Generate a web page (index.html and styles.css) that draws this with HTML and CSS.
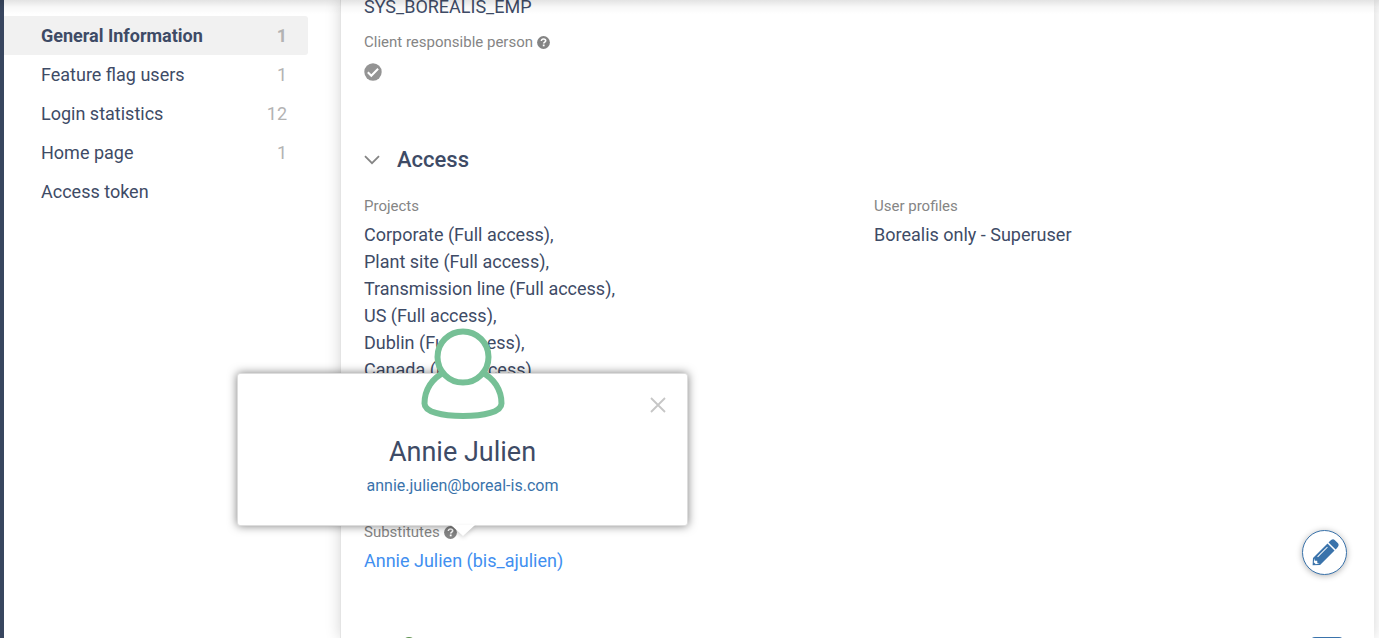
FILE: index.html
```html
<!DOCTYPE html>
<html lang="en">
<head>
<meta charset="utf-8">
<title>General Information</title>
<link rel="stylesheet" href="styles.css">
</head>
<body>
<div class="app">
  <div class="rail"></div>
  <nav class="sidebar">
    <a class="item active" href="#general"><span>General Information</span><span class="count">1</span></a>
    <a class="item" href="#flags"><span>Feature flag users</span><span class="count">1</span></a>
    <a class="item" href="#login"><span>Login statistics</span><span class="count">12</span></a>
    <a class="item" href="#home"><span>Home page</span><span class="count">1</span></a>
    <a class="item" href="#token"><span>Access token</span></a>
  </nav>
  <main class="content">
    <div class="system-name">SYS_BOREALIS_EMP</div>
    <section class="field responsible">
      <div class="label">Client responsible person
        <svg class="help" viewBox="0 0 13 13"><circle cx="6.5" cy="6.5" r="6.4" fill="#848484"/><path d="M4.4 5C4.4 3.7 5.2 3 6.5 3s2.2.8 2.2 1.8c0 1.3-2 1.3-2 2.7" fill="none" stroke="#fff" stroke-width="1.6"/><path d="M5.8 8.5h1.8v1.8H5.8z" fill="#fff"/></svg>
      </div>
      <div class="value check">
        <svg class="tick" viewBox="0 0 18 18"><circle cx="9" cy="9" r="8.7" fill="#949494"/><path d="M3.8 9.3l3.5 3.5 6.8-7" fill="none" stroke="#fff" stroke-width="2"/></svg>
      </div>
    </section>
    <h2 class="heading">
      <svg class="chevron" viewBox="0 0 16 10"><path d="M1 1.2l7 7 7-7" fill="none" stroke="#858585" stroke-width="1.8"/></svg>
      Access
    </h2>
    <div class="columns">
      <section class="field">
        <div class="label">Projects</div>
        <ul class="value projects">
          <li>Corporate (Full access),</li>
          <li>Plant site (Full access),</li>
          <li>Transmission line (Full access),</li>
          <li>US (Full access),</li>
          <li>Dublin (Full access),</li>
          <li>Canada (Full access)</li>
        </ul>
      </section>
      <section class="field">
        <div class="label">User profiles</div>
        <div class="value">Borealis only - Superuser</div>
      </section>
    </div>
    <section class="field substitutes">
      <div class="label">Substitutes
        <svg class="help" viewBox="0 0 13 13"><circle cx="6.5" cy="6.5" r="6.4" fill="#848484"/><path d="M4.4 5C4.4 3.7 5.2 3 6.5 3s2.2.8 2.2 1.8c0 1.3-2 1.3-2 2.7" fill="none" stroke="#fff" stroke-width="1.6"/><path d="M5.8 8.5h1.8v1.8H5.8z" fill="#fff"/></svg>
      </div>
      <a class="value link" href="#user">Annie Julien (bis_ajulien)</a>
    </section>
    <div class="next"><span class="next-icon"></span><span class="next-button"></span></div>
  </main>
</div>
<div class="top-shadow"></div>
<button class="edit" type="button" aria-label="Edit">
  <svg viewBox="0 0 28 28"><g transform="rotate(45 14 14)"><path d="M9 2Q9-2 12-2h4Q19-2 19 2V4H9z" fill="#3a73ab"/><path d="M9 5.500h10V26l-5 5.500L9 26z" fill="#3a73ab"/><path d="M11.500 8v14" stroke="#fff" stroke-width="1"/><path d="M10.500 25l1.800 1.500L14 25l1.700 1.500 1.800-1.500-2 3.500h-3z" fill="#fff"/></g></svg>
</button>
<aside class="card" role="dialog" aria-label="Annie Julien">
  <svg class="avatar" viewBox="0 0 84 92"><path d="M24 44C11 50 3.500 62 3.500 75.500C3.500 84 21 88 42 88s38.500-4 38.500-12.500C80.500 62 73 50 60 44z" fill="#fff" stroke="#76c096" stroke-width="6"/><circle cx="42" cy="29" r="25.500" fill="#fff" stroke="#76c096" stroke-width="6"/></svg>
  <button class="close" type="button" aria-label="Close"><svg viewBox="0 0 16 16"><path d="M1 1l14 14M15 1L1 15" stroke="#c6c6c6" stroke-width="1.800"/></svg></button>
  <div class="name">Annie Julien</div>
  <a class="email" href="mailto:annie.julien@boreal-is.com">annie.julien@boreal-is.com</a>
  <svg class="arrow" viewBox="0 0 24 12"><path d="M0 0h24L12 11z" fill="#fff"/></svg>
</aside>
</body>
</html>
```
FILE: styles.css
```css
* { box-sizing: border-box; }
body {
  margin: 0;
  font: 18px/27px Roboto, sans-serif;
  color: #3e4b66;
  background: #fff;
  overflow: hidden;
}
a { color: inherit; text-decoration: none; }
button { padding: 0; cursor: pointer; }
svg { display: block; }
.app { display: flex; height: 100vh; }
.rail { flex: 0 0 4px; background: #38465f; }
.sidebar {
  flex: 0 0 336px;
  display: flex;
  flex-direction: column;
  padding: 16px 32px 0 0;
}
.item {
  display: flex;
  justify-content: space-between;
  padding: 6px 21px 6px 37px;
  border-radius: 0 3px 3px 0;
}
.active { background: #f1f1f1; font-weight: 700; }
.count { color: #b3b3b3; }
.content {
  flex: 1;
  margin-right: 5px;
  padding: 0 0 0 23px;
  border-left: 1px solid #e4e4e4;
  box-shadow: 0 0 14px rgba(0, 0, 0, .17);
  overflow: hidden;
}
.system-name { line-height: 13px; }
.field { display: flex; flex-direction: column; gap: 4px; }
.responsible { margin-top: 18px; }
.label {
  display: flex;
  align-items: center;
  gap: 4px;
  font-size: 15px;
  line-height: 22px;
  color: #858585;
}
.help { width: 13px; height: 13px; }
.check { display: flex; align-items: center; height: 29px; }
.tick { width: 18px; height: 18px; }
.heading {
  display: flex;
  align-items: center;
  gap: 17px;
  margin: 60px 0 21px;
  font-size: 22px;
  line-height: 28px;
  font-weight: 500;
}
.chevron { width: 16px; height: 10px; }
.columns { display: grid; grid-template-columns: 1fr 1fr; column-gap: 10px; }
.projects { margin: 0; padding: 0; list-style: none; }
.substitutes { margin-top: 138px; align-items: flex-start; }
.link { color: #418ff0; }
.next {
  display: flex;
  justify-content: space-between;
  margin-top: 63px;
  padding: 0 31px 0 38px;
}
.next-icon { width: 14px; height: 14px; border-radius: 50%; background: #5b8f4c; }
.next-button { width: 32px; height: 14px; border-radius: 4px; background: #3a73ab; }
.top-shadow {
  position: absolute;
  inset: 0 0 auto;
  height: 14px;
  background: linear-gradient(rgba(0, 0, 0, .11), rgba(0, 0, 0, .03) 50%, transparent);
}
.edit {
  position: absolute;
  right: 32px;
  top: 530px;
  display: grid;
  place-items: center;
  width: 45px;
  height: 45px;
  border: 1px solid #3a73ab;
  border-radius: 50%;
  background: #fff;
  box-shadow: 0 1px 6px rgba(0, 0, 0, .3);
}
.edit svg { width: 28px; height: 28px; overflow: visible; }
.card {
  position: absolute;
  left: 237px;
  top: 373px;
  width: 451px;
  padding: 60px 0 23px;
  display: flex;
  flex-direction: column;
  align-items: center;
  border: 1px solid #ddd;
  border-radius: 3px;
  background: #fff;
  box-shadow: 0 0 10px rgba(0, 0, 0, .5);
}
.avatar { position: absolute; top: -46px; width: 84px; height: 92px; }
.close {
  position: absolute;
  right: 21px;
  top: 23px;
  border: 0;
  background: none;
}
.close svg { width: 16px; height: 16px; }
.name { font-size: 27px; line-height: 36px; }
.email { font-size: 16px; line-height: 32px; color: #3a73ab; }
.arrow {
  position: absolute;
  top: 100%;
  width: 24px;
  height: 12px;
  filter: drop-shadow(0 2px 2px rgba(0, 0, 0, .15));
}
```
